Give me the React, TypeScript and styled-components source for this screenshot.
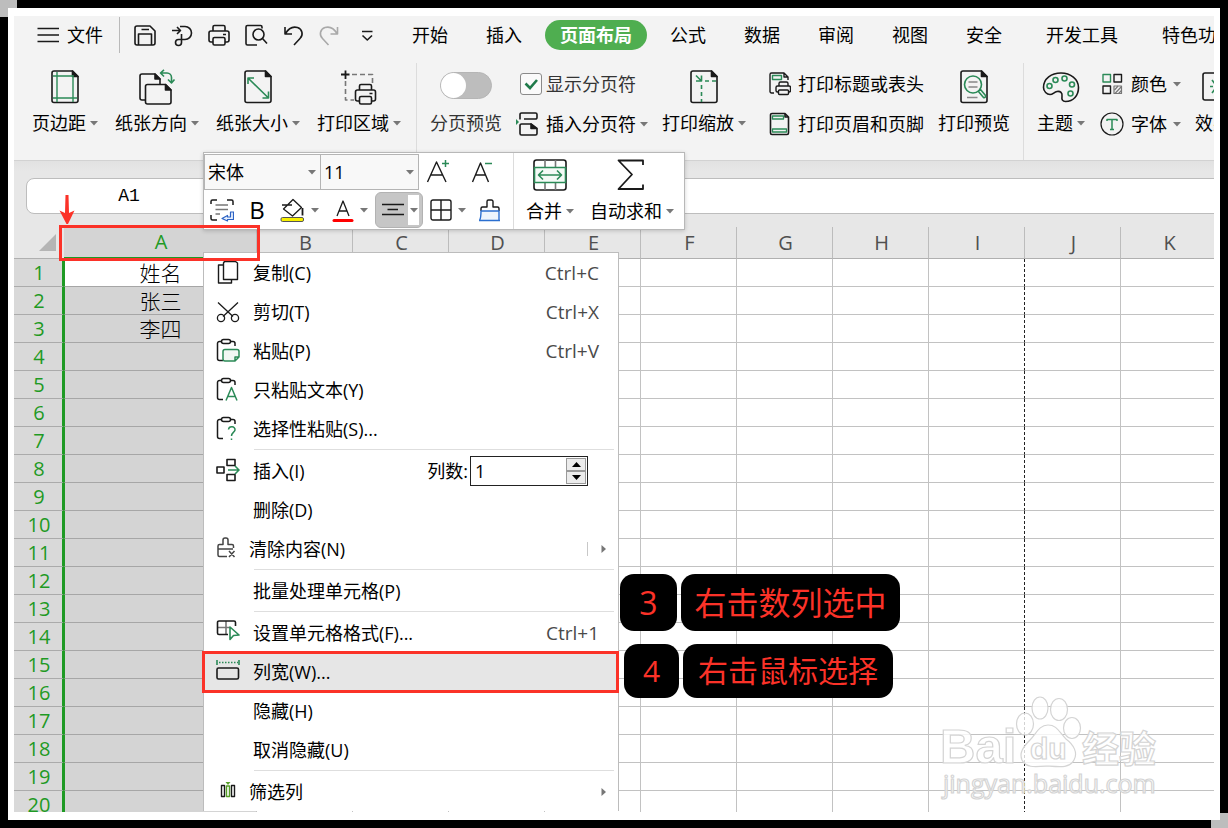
import React, { useState } from "react";
import styled, { createGlobalStyle, css } from "styled-components";

const GREEN = "#2b8a57";
const INK = "#1a1a1a";
const RED = "#fb3228";
const SELECT_GREEN = "#1f9a24";
const UI = `"Open Sans", "Noto Sans CJK SC", sans-serif`;

const Global = createGlobalStyle`
  *, *::before, *::after { box-sizing: border-box; }
  body { margin: 0; background: #000; font-family: ${UI}; font-size: 18px; line-height: 24px; color: #000; }
  button, input, select { font: inherit; color: inherit; margin: 0; padding: 0; }
  button { background: none; border: 0; white-space: nowrap; cursor: default; }
  svg { display: block; flex: none; }
`;

/* ---------- frame ---------- */

const Stage = styled.div`
  position: relative;
  height: 100vh;
  padding: 8px;
  overflow: hidden;
`;
const Corner = styled.span<{ $end?: boolean }>`
  position: absolute;
  width: 17px;
  height: 17px;
  background: #bdbdbd;
  ${(p) => (p.$end ? "right: 0; bottom: 0; height: 15px;" : "left: 0; top: 0;")}
`;
const Paper = styled.div`
  position: relative;
  height: 100%;
  padding: 8px 6px;
  background: #fff;
`;
const Workbook = styled.main`
  position: relative;
  display: flex;
  flex-direction: column;
  height: 100%;
  overflow: hidden;
  background: #e7e7e7;
`;

/* ---------- tab bar ---------- */

const TabBar = styled.header`
  display: flex;
  align-items: center;
  flex: none;
  height: 38px;
  padding-left: 23px;
  background: #f3f3f3;
`;
const FileButton = styled.button`
  display: flex;
  align-items: center;
  gap: 7px;
  padding-right: 16px;
  height: 36px;
  border-right: 1px solid #b9b9b9;
`;
const QuickAccess = styled.div`
  display: flex;
  align-items: center;
  gap: 13px;
  margin: 0 18px 0 13px;
`;
const Tabs = styled.nav`
  display: flex;
  gap: 8px;
`;
const Tab = styled.button<{ $active?: boolean; $wide?: boolean }>`
  flex: none;
  height: 30px;
  padding: 0 ${(p) => (p.$wide ? 21 : 15)}px;
  line-height: 28px;
  border-radius: 15px;
  ${(p) => p.$active && css`
    background: #4fae50;
    color: #fff;
    font-weight: 700;
  `}
`;

/* ---------- ribbon ---------- */

const Ribbon = styled.section`
  display: flex;
  flex: none;
  height: 106px;
  padding: 9px 0 0;
  background: #f3f3f3;
`;
const Group = styled.div<{ $gap: number; $start: number; $end: number }>`
  display: flex;
  flex: none;
  gap: ${(p) => p.$gap}px;
  padding: 0 ${(p) => p.$end}px 0 ${(p) => p.$start}px;
  border-right: 1px solid #dcdcdc;
`;
const Big = styled.button`
  display: flex;
  flex-direction: column;
  align-items: center;
  gap: 6px;
  padding-top: 6px;
  height: 78px;
  flex: none;
  line-height: 24px;
`;
const Caption = styled.span<{ $gap?: number }>`
  display: flex;
  align-items: center;
  gap: ${(p) => p.$gap ?? 4}px;
  white-space: nowrap;
`;
const Stack = styled.div<{ $inset?: number }>`
  display: flex;
  flex-direction: column;
  gap: 16px;
  padding: 9px 0 0 ${(p) => p.$inset ?? 0}px;
`;
const Line = styled.button`
  display: flex;
  align-items: center;
  gap: 7px;
  height: 24px;
`;
const CheckLine = styled.label`
  display: flex;
  align-items: center;
  gap: 4px;
  height: 24px;
  padding-left: 4px;
  color: #333;
`;
const Check = styled.span`
  position: relative;
  display: flex;
  input {
    appearance: none;
    width: 22px;
    height: 22px;
    border: 1px solid #8a8a8a;
    border-radius: 3px;
    background: #fafafa;
  }
  svg { position: absolute; left: 0; top: 0; pointer-events: none; }
  input:not(:checked) + svg { display: none; }
`;
const SwitchField = styled.label`
  display: flex;
  flex-direction: column;
  align-items: center;
  gap: 12px;
  padding-top: 9px;
  height: 78px;
  color: #333;
`;
const Switch = styled.input`
  appearance: none;
  width: 52px;
  height: 27px;
  border-radius: 14px;
  background: #bdbdbd;
  border: 1px solid #b5b5b5;
  &::before {
    content: "";
    display: block;
    width: 25px;
    height: 25px;
    border-radius: 50%;
    background: #fff;
  }
  &:checked::before { margin-left: 25px; }
`;

/* ---------- formula bar ---------- */

const FormulaBar = styled.section`
  display: flex;
  flex: none;
  gap: 12px;
  height: 67px;
  padding: 17px 0 13px 12px;
  border-top: 1px solid #d2d2d2;
  background: linear-gradient(#e2e2e2, #e7e7e7 10px);
`;
const NameBox = styled.input`
  width: 206px;
  border: 1px solid #bdbdbd;
  border-radius: 8px;
  background: #fff;
  text-align: center;
  font-family: "Liberation Mono", monospace;
`;
const FormulaInput = styled.input`
  flex: 1;
  min-width: 0;
  border: solid #bdbdbd;
  border-width: 1px 0 1px 1px;
  border-radius: 8px 0 0 8px;
  background: #fff;
`;

/* ---------- sheet ---------- */

const Sheet = styled.section`
  flex: 1;
  min-height: 0;
  overflow: hidden;
  background: #fff;
`;
const Grid = styled.table`
  table-layout: fixed;
  width: 1203px;
  border-collapse: separate;
  border-spacing: 0;
`;
const ColHead = styled.th<{ $on?: boolean }>`
  height: 32px;
  padding: 0 0 0 2px;
  font-weight: 400;
  font-size: 20px;
  line-height: 30px;
  color: ${(p) => (p.$on ? SELECT_GREEN : "#505050")};
  background: ${(p) => (p.$on ? "#d4d4d4" : "#e7e7e7")};
  border-right: 1px solid #bcbcbc;
  border-bottom: ${(p) => (p.$on ? `2px solid ${SELECT_GREEN}` : "1px solid #b0b0b0")};
`;
const CornerHead = styled.td`
  height: 32px;
  padding: 0 0 0 25px;
  background: #e7e7e7;
  border-bottom: 1px solid #b0b0b0;
`;
const RowHead = styled.th`
  height: 28px;
  padding: 0 0 0 2px;
  font-weight: 400;
  font-size: 20px;
  line-height: 27px;
  color: ${SELECT_GREEN};
  background: #d9d9d9;
  border-right: 2px solid ${SELECT_GREEN};
  border-bottom: 1px solid #ababab;
`;
const Cell = styled.td<{ $kind?: "active" | "selected"; $pageBreak?: boolean }>`
  height: 28px;
  padding: 0;
  text-align: center;
  font-size: 21px;
  line-height: 26px;
  font-weight: 300;
  background: ${(p) => (p.$kind === "selected" ? "#d4d4d4" : "#fff")};
  border-bottom: 1px solid ${(p) => (p.$kind ? "#a6a6a6" : "#c2c2c2")};
  border-right: 1px ${(p) => (p.$pageBreak ? "dashed #222" : "solid #c2c2c2")};
  ${(p) => p.$kind && css`border-left: 1px solid ${SELECT_GREEN};`}
`;

/* ---------- floating format bar ---------- */

const MiniBar = styled.div`
  position: absolute;
  left: 189px;
  top: 136px;
  display: flex;
  height: 78px;
  width: 482px;
  border: 1px solid #b8b8b8;
  background: #fff;
  box-shadow: 0 1px 4px rgba(0, 0, 0, 0.18);
`;
const MiniLeft = styled.div`
  display: flex;
  flex-direction: column;
  gap: 2px;
  width: 310px;
  padding-top: 1px;
  border-right: 1px solid #dcdcdc;
`;
const MiniRow = styled.div<{ $gap: number; $start: number }>`
  display: flex;
  align-items: center;
  gap: ${(p) => p.$gap}px;
  height: 36px;
  padding-left: ${(p) => p.$start}px;
`;
const SizeButtons = styled.span`
  display: flex;
  gap: 21px;
`;
const Combo = styled.div`
  display: flex;
  height: 36px;
  border: 1px solid #b4b4b4;
  background: #f8f8f8;
`;
const Pick = styled.label<{ $w: number; $rule?: boolean }>`
  display: flex;
  align-items: center;
  width: ${(p) => p.$w}px;
  padding-right: 4px;
  padding-left: 3px;
  ${(p) => p.$rule && "border-right: 1px solid #b4b4b4;"}
  select {
    appearance: none;
    flex: 1;
    min-width: 0;
    border: 0;
    background: none;
    outline: 0;
  }
`;
const MiniButton = styled.button`
  display: flex;
  align-items: center;
  gap: 6px;
`;
const BoldGlyph = styled.span`
  width: 20px;
  text-align: center;
  font-size: 24px;
  line-height: 30px;
  font-weight: 500;
`;
const AlignButton = styled.button`
  display: flex;
  align-items: center;
  height: 36px;
  width: 48px;
  padding: 0 3px 0 6px;
  gap: 4px;
  border-radius: 6px;
  background: #c6c6c6;
  border: 1px solid #b2b2b2;
`;
const AlignDrop = styled.span`
  display: flex;
  align-items: center;
  justify-content: center;
  width: 12px;
  height: 30px;
  background: #fff;
`;
const MiniBig = styled.button`
  display: flex;
  flex-direction: column;
  align-items: center;
  gap: 7px;
  padding-top: 5px;
  margin-left: 12px;
  & + & { margin-left: 16px; }
`;

/* ---------- context menu ---------- */

const Menu = styled.div`
  position: absolute;
  left: 189px;
  top: 236px;
  width: 416px;
  border: 1px solid #bcbcbc;
  border-bottom: 0;
  background: #fff;
`;
const MenuRow = styled.div<{ $hot?: boolean }>`
  display: flex;
  align-items: center;
  height: 39px;
  background: ${(p) => (p.$hot ? "#e6e6e6" : "#fff")};
`;
const MenuItem = styled.button<{ $near?: boolean }>`
  display: flex;
  flex: 1;
  align-items: center;
  gap: ${(p) => (p.$near ? 9 : 13)}px;
  height: 39px;
  padding: 0 19px 0 12px;
  text-align: left;
`;
const IconSlot = styled.span`
  display: flex;
  width: 24px;
  height: 26px;
`;
const Shortcut = styled.span`
  margin-left: auto;
  font-size: 19px;
  color: #4a4a4a;
`;
const SubArrow = styled.span<{ $rule?: boolean }>`
  display: flex;
  align-items: center;
  height: 14px;
  margin-left: auto;
  margin-right: -7px;
  padding-left: 13px;
  ${(p) => p.$rule && "border-left: 1px solid #c8c8c8;"}
`;
const Divider = styled.hr`
  height: 1px;
  margin: 1px 4px 1px 50px;
  border: 0;
  background: #dedede;
`;
const CountField = styled.label`
  display: flex;
  align-items: center;
  gap: 2px;
  margin-right: 30px;
`;
const Spin = styled.span`
  display: flex;
  width: 118px;
  height: 30px;
  padding: 1px;
  border: 1px solid #222;
  input {
    appearance: textfield;
    flex: 1;
    min-width: 0;
    padding-left: 3px;
    border: 0;
    outline: 0;
  }
  input::-webkit-inner-spin-button { appearance: none; }
`;
const SpinButtons = styled.span`
  display: flex;
  flex-direction: column;
  width: 20px;
  button {
    display: flex;
    flex: 1;
    align-items: center;
    justify-content: center;
    border: 1px solid #9a9a9a;
    background: #ececec;
  }
`;

/* ---------- annotations ---------- */

const Outline = styled.div<{ $x: number; $y: number; $w: number; $h: number }>`
  position: absolute;
  left: ${(p) => p.$x}px;
  top: ${(p) => p.$y}px;
  width: ${(p) => p.$w}px;
  height: ${(p) => p.$h}px;
  border: 3px solid ${RED};
  pointer-events: none;
`;
const ArrowMark = styled.svg`
  position: absolute;
  left: 45px;
  top: 178px;
`;
const Note = styled.div<{ $x: number; $y: number; $h: number; $size: number; $gap: number }>`
  position: absolute;
  left: ${(p) => p.$x}px;
  top: ${(p) => p.$y}px;
  display: flex;
  gap: ${(p) => p.$gap}px;
  color: ${RED};
  font-size: ${(p) => p.$size}px;
  line-height: ${(p) => p.$h}px;
`;
const Badge = styled.span<{ $w: number }>`
  width: ${(p) => p.$w}px;
  border-radius: 14px;
  background: #000;
  text-align: center;
  white-space: nowrap;
`;
const Watermark = styled.svg`
  position: absolute;
  right: 50px;
  bottom: 4px;
`;

/* ---------- icons ---------- */

type P = { w: number; h: number; children: React.ReactNode; sw?: number };
const Ico = ({ w, h, children, sw = 1.6 }: P) => (
  <svg width={w} height={h} viewBox={`0 0 ${w} ${h}`} fill="none" stroke={INK} strokeWidth={sw} strokeLinejoin="round" aria-hidden="true">
    {children}
  </svg>
);
const Down = () => (
  <svg width="8" height="5" viewBox="0 0 8 5" aria-hidden="true"><path d="M0 0h8L4 4.500z" fill="#777" /></svg>
);
const Page = () => (
  <>
    <path d="M7 2H25.500L31 7.500V31.500a2 2 0 0 1-2 2H7a2 2 0 0 1-2-2V4a2 2 0 0 1 2-2z" />
    <path d="M25.500 2V7.500H31z" fill={INK} />
  </>
);
const IcoBurger = () => <Ico w={23} h={20}><path d="M0.500 3.500H22M0.500 10H22M0.500 16.500H22" /></Ico>;
const IcoSave = () => (
  <Ico w={24} h={24}>
    <path d="M4 3H17L22 8V20a2 2 0 0 1-2 2H4a2 2 0 0 1-2-2V5a2 2 0 0 1 2-2z" />
    <path d="M5.500 22V11H18.500V22M8.500 6.500H16" />
  </Ico>
);
const IcoOutput = () => (
  <Ico w={24} h={24}>
    <path d="M2 7.500H10M7 4l3.500 3.500L7 11" />
    <path d="M10 3.500H15a6.500 6.500 0 0 1 0 13H8.500a3 3 0 1 0 3 3V11" />
  </Ico>
);
const printerPaths = (
  <>
    <path d="M6 8V4a1.500 1.500 0 0 1 1.500-1.500h9A1.500 1.500 0 0 1 18 4V8" />
    <path d="M6 19H4a2 2 0 0 1-2-2V10a2 2 0 0 1 2-2H20a2 2 0 0 1 2 2v7a2 2 0 0 1-2 2H18M16 11.500h3" />
    <rect x="6" y="14.500" width="12" height="7.500" rx="1.500" />
  </>
);
const IcoPrint = () => <Ico w={24} h={24}>{printerPaths}</Ico>;
const IcoPreviewSmall = () => (
  <Ico w={24} h={24}>
    <path d="M13 22H3.500a1.500 1.500 0 0 1-1.500-1.500V4a1.500 1.500 0 0 1 1.500-1.500h13A1.500 1.500 0 0 1 18 4V5.500" />
    <circle cx="14.500" cy="11.500" r="5.500" /><path d="M18.500 15.500L23 20.500" />
  </Ico>
);
const IcoUndo = () => <Ico w={24} h={24}><path d="M4 4V11H11M4.500 10.500C8 4.500 13 3.500 16.500 4.500a6.500 6.500 0 0 1 2.500 11L13 22" /></Ico>;
const IcoRedo = () => <Ico w={24} h={24}><g stroke="#a9a9a9"><path d="M19.500 4V11H12.500M19 10.500C15.500 4.500 10.500 3.500 7 4.500a6.500 6.500 0 0 0-2.500 11L10.500 22" /></g></Ico>;
const IcoMore = () => <Ico w={24} h={24}><path d="M7 8.500H17.500M7.500 12.500l4.800 4.500 4.700-4.500" /></Ico>;

const IcoMargins = () => (
  <Ico w={36} h={36}><Page /><path stroke={GREEN} strokeWidth="1.400" d="M10 3V33M26 6V33M6 7H26M6 29H30" /></Ico>
);
const IcoOrient = () => (
  <Ico w={38} h={36}>
    <path d="M8 31H4a2 2 0 0 1-2-2V7a2 2 0 0 1 2-2H17l5 5V15" /><path d="M17 5v5h5z" fill={INK} />
    <path fill="#f3f3f3" d="M9.500 15.500H27.500L33 21V33a2 2 0 0 1-2 2H9.500a2 2 0 0 1-2-2V17.500a2 2 0 0 1 2-2z" />
    <path d="M27.500 15.500V21H33z" fill={INK} />
    <path stroke={GREEN} d="M26 .800L22.500 4l3.500 3.500M23 4h6a4.500 4.500 0 0 1 4.500 4.500V13.500M30 10.500l3.500 3.500 3-3.500" />
  </Ico>
);
const IcoSize = () => (
  <Ico w={36} h={36}><Page /><path stroke={GREEN} d="M8.500 9.500L28 28.500M8 15V9H14M28.500 22.500v6.500H22.500" /></Ico>
);
const IcoArea = () => (
  <Ico w={38} h={36}>
    <path d="M5.500 1.500V10M1 5.500H9.500" strokeWidth="1.800" />
    <path stroke="#777" strokeDasharray="5 3" d="M12 5.500H32.500V14M5.500 12V31H14" />
    <g transform="translate(13.500 13)">{printerPaths}</g>
  </Ico>
);
const IcoScale = () => (
  <Ico w={36} h={36}><Page /><path stroke={GREEN} d="M10 6.500l5.500 5.500M15.500 6.500V12H10" /><path stroke={GREEN} strokeDasharray="4 3" d="M19 12H31M15.500 16V33" /></Ico>
);
const IcoPreview = () => (
  <Ico w={36} h={36}>
    <Page />
    <circle cx="17" cy="15.500" r="8.500" stroke={GREEN} />
    <path stroke={GREEN} d="M22.500 22.500l2-2 5 6a1.500 1.500 0 0 1-2 2z" />
    <path stroke="#888" d="M12.500 13H21.500M12.500 18H21.500M11 28.500H21.500" />
  </Ico>
);
const IcoInsertBreak = () => (
  <Ico w={23} h={24}>
    <path d="M4 7.500V2.500a1.500 1.500 0 0 1 1.500-1.500h14A1.500 1.500 0 0 1 21 2.500v3a1.500 1.500 0 0 1-1.500 1.500H8" />
    <path d="M5.500 12H15l6 5v4.500a1.500 1.500 0 0 1-1.500 1.500h-14A1.500 1.500 0 0 1 4 21.500v-8A1.500 1.500 0 0 1 5.500 12z" /><path d="M15 12v4.500h6z" fill={INK} />
    <path d="M0 7l3 3-3 3z" fill={GREEN} stroke="none" />
  </Ico>
);
const IcoTitles = () => (
  <Ico w={22} h={24} sw={1.4}>
    <path d="M5 21H2.500A1.500 1.500 0 0 1 1 19.500v-17A1.500 1.500 0 0 1 2.500 1H15l4 4V8M15 1v4h4" />
    <rect x="3.500" y="3.500" width="9" height="4" stroke={GREEN} />
    <path d="M10 14v-2.500A1.500 1.500 0 0 1 11.500 10h6A1.500 1.500 0 0 1 19 11.500V14M9 20H8.500A1.500 1.500 0 0 1 7 18.500v-3A1.500 1.500 0 0 1 8.500 14H20a1.500 1.500 0 0 1 1.500 1.500v3A1.500 1.500 0 0 1 20 20" />
    <rect x="9.500" y="18" width="10" height="4.500" rx="1" />
  </Ico>
);
const IcoHeaderFooter = () => (
  <Ico w={22} h={24}>
    <path d="M3 1.500H16l3.500 3.500V21a1.500 1.500 0 0 1-1.500 1.500H3A1.500 1.500 0 0 1 1.500 21V3A1.500 1.500 0 0 1 3 1.500zM16 1.500V5h3.500" />
    <g stroke={GREEN} strokeWidth="1.300"><rect x="3.500" y="4" width="11" height="3" /><rect x="3.500" y="17" width="14" height="3" /></g>
  </Ico>
);
const IcoTheme = () => (
  <Ico w={38} h={36}>
    <path d="M1.500 18.500C1.500 9.500 9.500 4 19 4s17.500 6 17.500 14.500c0 8-5 14-13 14-3 0-4-2-3.500-5 .500-4-1.500-5.500-5-5-3 .500-4 3-7 3S1.500 22.500 1.500 18.500z" />
    <g stroke={GREEN}><circle cx="7.500" cy="17" r="2.500" /><circle cx="13.500" cy="11" r="2.500" /><circle cx="22.500" cy="9.500" r="2.500" /><circle cx="30" cy="15.500" r="2.500" /><circle cx="28.500" cy="24.500" r="2.500" /></g>
  </Ico>
);
const IcoColors = () => (
  <Ico w={24} h={24} sw={1.4}>
    <rect x="3" y="2.500" width="7.500" height="7.500" stroke={GREEN} /><rect x="14" y="2.500" width="7.500" height="7.500" />
    <rect x="3" y="14" width="7.500" height="7.500" /><g stroke="#777" strokeWidth="1.200"><rect x="14" y="14" width="7.500" height="7.500" /><path d="M14.500 18l3.500-4M15 21.500l6.500-7M18.500 21.500l3-3" /></g>
  </Ico>
);
const IcoFonts = () => <Ico w={24} h={24} sw={1.2}><circle cx="12" cy="12" r="11" /><path stroke={GREEN} strokeWidth="1.500" d="M7 9V7.500H17V9M12 7.500V17.500M10 17.500h4" /></Ico>;
const IcoEffects = () => <Ico w={36} h={36}><rect x="2" y="4" width="30" height="27" rx="2" /><path stroke={GREEN} d="M11 11l3 4M11 24l3-4M9 17.500h3M22 15l3-3M22 20l3 3" /></Ico>;

const IcoWrap = () => (
  <Ico w={24} h={24} sw={1.5}>
    <path d="M1 6V3.500A1.500 1.500 0 0 1 2.500 2H7M17 2h4.500A1.500 1.500 0 0 1 23 3.500V7M1 17v3.500A1.500 1.500 0 0 0 2.500 22H7" />
    <path stroke="#777" d="M5.500 7H18M5.500 11.500H18M5.500 16H10" />
    <path stroke="#2b62c4" fill="#e8f0fc" strokeWidth="1.200" d="M20.500 14H23.500V21.500H17.500V23L12 20.500l5.500-3V19H20.500z" />
  </Ico>
);
const IcoFill = () => (
  <Ico w={25} h={24} sw={1.3}>
    <path d="M13 1.500L21.500 9.500 12.500 18 3.500 11zM2 7H12" /><path d="M22.500 10v7.500" strokeWidth="1.800" /><rect x="1" y="19.500" width="22.500" height="4" rx="1.500" fill="#f7f000" stroke="#555" strokeWidth="1" />
  </Ico>
);
const IcoFontColor = () => <Ico w={22} h={24}><path d="M5 18L11 3l6 15M7 13h8" strokeWidth="1.300" /><path d="M2 22.500H20" stroke="#f00" strokeWidth="3" strokeLinecap="round" /></Ico>;
const IcoAlign = () => <Ico w={22} h={18} sw={1.3}><path d="M0 3.500H22M5.500 8.500H16M0 13.500H22" /></Ico>;
const IcoBorders = () => <Ico w={22} h={22} sw={1.4}><rect x="1" y="1" width="20" height="20" rx="2" /><path d="M1 11H21M11 1V21" /></Ico>;
const IcoBrush = () => (
  <Ico w={22} h={24} sw={1.4}>
    <path d="M2 13V10.500A1.500 1.500 0 0 1 3.500 9H8V3.500A1.500 1.500 0 0 1 9.500 2h3A1.500 1.500 0 0 1 14 3.500V9H18.500A1.500 1.500 0 0 1 20 10.500V13" />
    <path stroke="#2b6fd0" fill="#edf5fd" d="M2 13H20V22.500H.500C2 20 2 18 2 13zM0 22.500h21" />
  </Ico>
);
const IcoGrow = () => <Ico w={24} h={26} sw={1.4}><path d="M1.500 23L10.500 3 20 23M5 16H17" /><path stroke={GREEN} strokeWidth="1.500" d="M16 4.500H23M19.500 1V8" /></Ico>;
const IcoShrink = () => <Ico w={22} h={26} sw={1.4}><path d="M1.500 23L9.500 4 17.500 23M4.500 16H14.500" /><path stroke={GREEN} strokeWidth="1.500" d="M14 4.500H21" /></Ico>;
const IcoMerge = () => (
  <Ico w={34} h={34}>
    <rect x="1" y="2" width="32" height="30" rx="2.500" /><path stroke="#777" d="M12 2V9M22.500 2V9M12 25v7M22.500 25v7" />
    <rect x="1.500" y="9.500" width="31" height="15" stroke={GREEN} fill="#f4faf6" /><path stroke={GREEN} d="M6 17H28M10 12.500L5.500 17l4.500 4.500M24 12.500l4.500 4.500-4.500 4.500" />
  </Ico>
);
const IcoSigma = () => <Ico w={34} h={34} sw={1.8}><path d="M28 7V2.500H3.500L17 16.500 3.500 31H28V26.500" /></Ico>;

const IcoCopy = () => <Ico w={24} h={26} sw={1.4}><path d="M7 5H2.500V23H15.500V20" /><path d="M8.500 1.500H19.500L21.500 3V19.500H7.500V3z" fill="#fff" /></Ico>;
const IcoCut = () => <Ico w={24} h={26} sw={1.3}><path d="M2 3.500L17 17.500M22 3.500L7 17.500" /><circle cx="5" cy="19" r="3.600" /><circle cx="19" cy="19" r="3.600" /></Ico>;
const clip = <><path d="M7 22.500H3.500a2 2 0 0 1-2-2V5.500a2 2 0 0 1 2-2H6M14 3.500h3a2 2 0 0 1 2 2V8" /><rect x="5.500" y="1.500" width="9" height="4" rx="2" /></>;
const IcoPaste = () => <Ico w={24} h={26} sw={1.5}>{clip}<path stroke={GREEN} fill="#f1f7f3" d="M9 11.500H21a2 2 0 0 1 2 2V19l-4 4H9a2 2 0 0 1-2-2V13.500a2 2 0 0 1 2-2zM19 23v-4h4" /></Ico>;
const IcoPasteText = () => <Ico w={24} h={26} sw={1.5}>{clip}<path stroke={GREEN} d="M10 23.500L15.500 10.500 21 23.500M12 19.500h7" /></Ico>;
const IcoPasteSpecial = () => <Ico w={24} h={26} sw={1.5}>{clip}<path stroke={GREEN} d="M12.500 13.500C13 9.500 19.500 10 19 14c-.500 2.500-3.500 2.500-3.500 6M15.500 22.500V24" /></Ico>;
const IcoInsert = () => (
  <Ico w={24} h={26} sw={1.6}>
    <rect x="1" y="9" width="7" height="6" /><rect x="11" y="1.500" width="8" height="6" /><rect x="11" y="16.500" width="8" height="6" />
    <path stroke={GREEN} d="M12 12H23M19 8l4 4-4 4" />
  </Ico>
);
const IcoClear = () => (
  <Ico w={24} h={26} sw={1.5}>
    <path stroke="#444" d="M11 20.500H3.500A1.500 1.500 0 0 1 2 19V10A1.500 1.500 0 0 1 3.500 8.500H7V4a2 2 0 0 1 2-2h1a2 2 0 0 1 2 2V8.500h4A1.500 1.500 0 0 1 17.500 10v2M2 13H17M13 15l5.500 6M18.500 15L13 21" />
  </Ico>
);
const IcoFormat = () => (
  <Ico w={24} h={26} sw={1.6}>
    <path stroke="#777" d="M10 1V14M1 7.500H14" /><path d="M12 14.500H3A1.500 1.500 0 0 1 1.500 13V2.500A1.500 1.500 0 0 1 3 1H18a1.500 1.500 0 0 1 1.500 1.500V6" />
    <path stroke={GREEN} fill="#fff" d="M14 7l9 8-5.500.500L14 19.500z" />
  </Ico>
);
const IcoColWidth = () => (
  <Ico w={24} h={26}>
    <path stroke={GREEN} d="M1 1V6M23 1V6" /><path stroke={GREEN} strokeDasharray="1.500 1.500" d="M3 3.500H22" /><rect x="1" y="9" width="21.500" height="11" rx="1.500" />
  </Ico>
);
const IcoFilter = () => (
  <Ico w={24} h={26} sw={1.4}>
    <rect x="5.500" y="6.500" width="3" height="11" /><rect x="15.500" y="6.500" width="3" height="11" /><rect x="10.500" y="7" width="3" height="10.500" stroke="#58a02a" /><path d="M9.500 3h5L12 6z" fill="#58a02a" stroke="none" />
  </Ico>
);
const Right = () => <svg width="5" height="8" viewBox="0 0 5 8" aria-hidden="true"><path d="M.500 0L5 4 .500 8z" fill="#777" /></svg>;

/* ---------- data ---------- */

const columns = ["A", "B", "C", "D", "E", "F", "G", "H", "I", "J", "K"];
const names = ["姓名", "张三", "李四"];
const rows = Array.from({ length: 20 }, (_, i) => i + 1);
const tabs = ["开始", "插入", "页面布局", "公式", "数据", "审阅", "视图", "安全", "开发工具", "特色功能"];

type Entry = { text: string; icon?: React.ReactNode; keys?: string; sub?: "plain" | "ruled"; hot?: boolean; count?: boolean };
const menu: (Entry | null)[] = [
  { text: "复制(C)", icon: <IcoCopy />, keys: "Ctrl+C" },
  { text: "剪切(T)", icon: <IcoCut />, keys: "Ctrl+X" },
  { text: "粘贴(P)", icon: <IcoPaste />, keys: "Ctrl+V" },
  { text: "只粘贴文本(Y)", icon: <IcoPasteText /> },
  { text: "选择性粘贴(S)...", icon: <IcoPasteSpecial /> },
  null,
  { text: "插入(I)", icon: <IcoInsert />, count: true },
  { text: "删除(D)" },
  { text: "清除内容(N)", icon: <IcoClear />, sub: "ruled" },
  null,
  { text: "批量处理单元格(P)" },
  null,
  { text: "设置单元格格式(F)...", icon: <IcoFormat />, keys: "Ctrl+1" },
  { text: "列宽(W)...", icon: <IcoColWidth />, hot: true },
  { text: "隐藏(H)" },
  { text: "取消隐藏(U)" },
  null,
  { text: "筛选列", icon: <IcoFilter />, sub: "plain" },
];

const BigTool = ({ icon, label, drop }: { icon: React.ReactNode; label: string; drop?: boolean }) => (
  <Big type="button">{icon}<Caption>{label}{drop && <Down />}</Caption></Big>
);

export default function App() {
  const [count, setCount] = useState(1);
  return (
    <Stage>
      <Global />
      <Corner /><Corner $end />
      <Paper>
        <Workbook>
          <TabBar>
            <FileButton type="button"><IcoBurger />文件</FileButton>
            <QuickAccess>
              {[["保存", IcoSave], ["输出", IcoOutput], ["打印", IcoPrint], ["预览", IcoPreviewSmall], ["撤销", IcoUndo], ["恢复", IcoRedo], ["更多", IcoMore]].map(([name, I]: any) => (
                <button type="button" key={name} aria-label={name}><I /></button>
              ))}
            </QuickAccess>
            <Tabs>
              {tabs.map((t) => <Tab type="button" key={t} $active={t === "页面布局"} $wide={t === "开发工具"}>{t}</Tab>)}
            </Tabs>
          </TabBar>

          <Ribbon>
            <Group $gap={17} $start={18} $end={15}>
              <BigTool icon={<IcoMargins />} label="页边距" drop />
              <BigTool icon={<IcoOrient />} label="纸张方向" drop />
              <BigTool icon={<IcoSize />} label="纸张大小" drop />
              <BigTool icon={<IcoArea />} label="打印区域" drop />
            </Group>
            <Group $gap={14} $start={13} $end={13}>
              <SwitchField><Switch type="checkbox" role="switch" />分页预览</SwitchField>
              <Stack>
                <CheckLine>
                  <Check>
                    <input type="checkbox" defaultChecked />
                    <svg width="22" height="22" viewBox="0 0 22 22"><path d="M5.500 10.500l4.500 4.500 7-8" fill="none" stroke="#1f7a4a" strokeWidth="2.600" /></svg>
                  </Check>
                  显示分页符
                </CheckLine>
                <Line type="button"><IcoInsertBreak /><Caption>插入分页符<Down /></Caption></Line>
              </Stack>
              <BigTool icon={<IcoScale />} label="打印缩放" drop />
              <Stack $inset={9}>
                <Line type="button"><IcoTitles />打印标题或表头</Line>
                <Line type="button"><IcoHeaderFooter />打印页眉和页脚</Line>
              </Stack>
              <BigTool icon={<IcoPreview />} label="打印预览" />
            </Group>
            <Group $gap={14} $start={13} $end={16}>
              <BigTool icon={<IcoTheme />} label="主题" drop />
              <Stack $inset={1}>
                <Line type="button"><IcoColors /><Caption $gap={6}>颜色<Down /></Caption></Line>
                <Line type="button"><IcoFonts /><Caption $gap={6}>字体<Down /></Caption></Line>
              </Stack>
              <BigTool icon={<IcoEffects />} label="效果" drop />
            </Group>
          </Ribbon>

          <FormulaBar>
            <NameBox aria-label="名称框" defaultValue="A1" />
            <FormulaInput aria-label="编辑栏" />
          </FormulaBar>

          <Sheet>
            <Grid>
              <colgroup>
                <col style={{ width: 50 }} />
                {columns.map((c) => <col key={c} style={{ width: c === "A" ? 193 : 96 }} />)}
              </colgroup>
              <thead>
                <tr>
                  <CornerHead><svg width="17" height="17" viewBox="0 0 17 17"><path d="M17 0V17H0z" fill="#b5b5b5" /></svg></CornerHead>
                  {columns.map((c) => <ColHead key={c} scope="col" $on={c === "A"}>{c}</ColHead>)}
                </tr>
              </thead>
              <tbody>
                {rows.map((r) => (
                  <tr key={r}>
                    <RowHead scope="row">{r}</RowHead>
                    {columns.map((c) => (
                      <Cell key={c} $kind={c !== "A" ? undefined : r === 1 ? "active" : "selected"} $pageBreak={c === "I"}>
                        {c === "A" ? names[r - 1] : null}
                      </Cell>
                    ))}
                  </tr>
                ))}
              </tbody>
            </Grid>
          </Sheet>

          <MiniBar role="toolbar">
            <MiniLeft>
              <MiniRow $gap={7} $start={0}>
                <Combo>
                  <Pick $w={116} $rule><select aria-label="字体"><option>宋体</option></select><Down /></Pick>
                  <Pick $w={97}><select aria-label="字号"><option>11</option></select><Down /></Pick>
                </Combo>
                <SizeButtons>
                  <MiniButton type="button" aria-label="增大字号"><IcoGrow /></MiniButton>
                  <MiniButton type="button" aria-label="减小字号"><IcoShrink /></MiniButton>
                </SizeButtons>
              </MiniRow>
              <MiniRow $gap={13} $start={6}>
                <MiniButton type="button" aria-label="自动换行"><IcoWrap /></MiniButton>
                <MiniButton type="button"><BoldGlyph>B</BoldGlyph></MiniButton>
                <MiniButton type="button" aria-label="填充颜色"><IcoFill /><Down /></MiniButton>
                <MiniRow as="span" $gap={7} $start={0}>
                  <MiniButton type="button" aria-label="字体颜色"><IcoFontColor /><Down /></MiniButton>
                  <AlignButton type="button" aria-label="居中"><IcoAlign /><AlignDrop><Down /></AlignDrop></AlignButton>
                  <MiniButton type="button" aria-label="边框"><IcoBorders /><Down /></MiniButton>
                </MiniRow>
                <MiniButton type="button" aria-label="格式刷"><IcoBrush /></MiniButton>
              </MiniRow>
            </MiniLeft>
            <MiniBig type="button"><IcoMerge /><Caption>合并<Down /></Caption></MiniBig>
            <MiniBig type="button"><IcoSigma /><Caption>自动求和<Down /></Caption></MiniBig>
          </MiniBar>

          <Menu role="menu">
            {menu.map((m, i) =>
              m === null ? <Divider key={i} /> : (
                <MenuRow key={i} $hot={m.hot}>
                  <MenuItem type="button" role="menuitem" $near={!!m.sub}>
                    <IconSlot>{m.icon}</IconSlot>
                    {m.text}
                    {m.keys && <Shortcut>{m.keys}</Shortcut>}
                    {m.sub && <SubArrow $rule={m.sub === "ruled"}><Right /></SubArrow>}
                  </MenuItem>
                  {m.count && (
                    <CountField>
                      列数:
                      <Spin>
                        <input type="number" value={count} onChange={(e) => setCount(Number(e.target.value))} />
                        <SpinButtons>
                          <button type="button" aria-label="增加" onClick={() => setCount(count + 1)}><svg width="9" height="5" viewBox="0 0 9 5"><path d="M0 5h9L4.500 0z" /></svg></button>
                          <button type="button" aria-label="减少" onClick={() => setCount(Math.max(1, count - 1))}><svg width="9" height="5" viewBox="0 0 9 5"><path d="M0 0h9L4.500 5z" /></svg></button>
                        </SpinButtons>
                      </Spin>
                    </CountField>
                  )}
                </MenuRow>
              )
            )}
          </Menu>

          <Outline $x={45} $y={209} $w={201} $h={36} />
          <Outline $x={188} $y={635} $w={417} $h={42} />
          <ArrowMark width="16" height="32" viewBox="0 0 16 32" aria-hidden="true">
            <path d="M6.500 1h3l.500 18 5.500-2.500L9 30H7.500L.500 16.500l5.500 2.500z" fill={RED} />
          </ArrowMark>
          <Note $x={606} $y={558} $h={57} $size={32} $gap={4}><Badge $w={57}>3</Badge><Badge $w={219}>右击数列选中</Badge></Note>
          <Note $x={610} $y={628} $h={54} $size={30} $gap={4}><Badge $w={55}>4</Badge><Badge $w={210}>右击鼠标选择</Badge></Note>

          <Watermark width="226" height="116" viewBox="0 0 226 116" role="img" aria-label="Baidu 经验" fill="#fff" fillOpacity="0.800" stroke="#d4d4d4" strokeWidth="1.200">
            <ellipse cx="87" cy="32" rx="8.500" ry="11" /><ellipse cx="102" cy="16" rx="8" ry="11" /><ellipse cx="121" cy="17.500" rx="8.500" ry="11" /><ellipse cx="134" cy="36" rx="8.500" ry="10.500" />
            <path d="M110 33c9 0 11 7 18 14 8 6 12 14 8 21-4 8-13 7-26 6-14 1-22 2-26-6-3-7 1-13 8-20 6-6 9-15 18-15z" />
            <g fontWeight="700">
              <text x="2" y="71" fontFamily="Liberation Sans, sans-serif" fontSize="49">Bai</text>
              <text x="92" y="67" fontFamily="Liberation Sans, sans-serif" fontSize="30">du</text>
              <text x="144" y="71" fontFamily="Noto Sans CJK SC, sans-serif" fontSize="37">经验</text>
              <text x="5" y="101" fontFamily="Open Sans, sans-serif" fontSize="25" fontWeight="400">jingyan.baidu.com</text>
            </g>
          </Watermark>
        </Workbook>
      </Paper>
    </Stage>
  );
}
